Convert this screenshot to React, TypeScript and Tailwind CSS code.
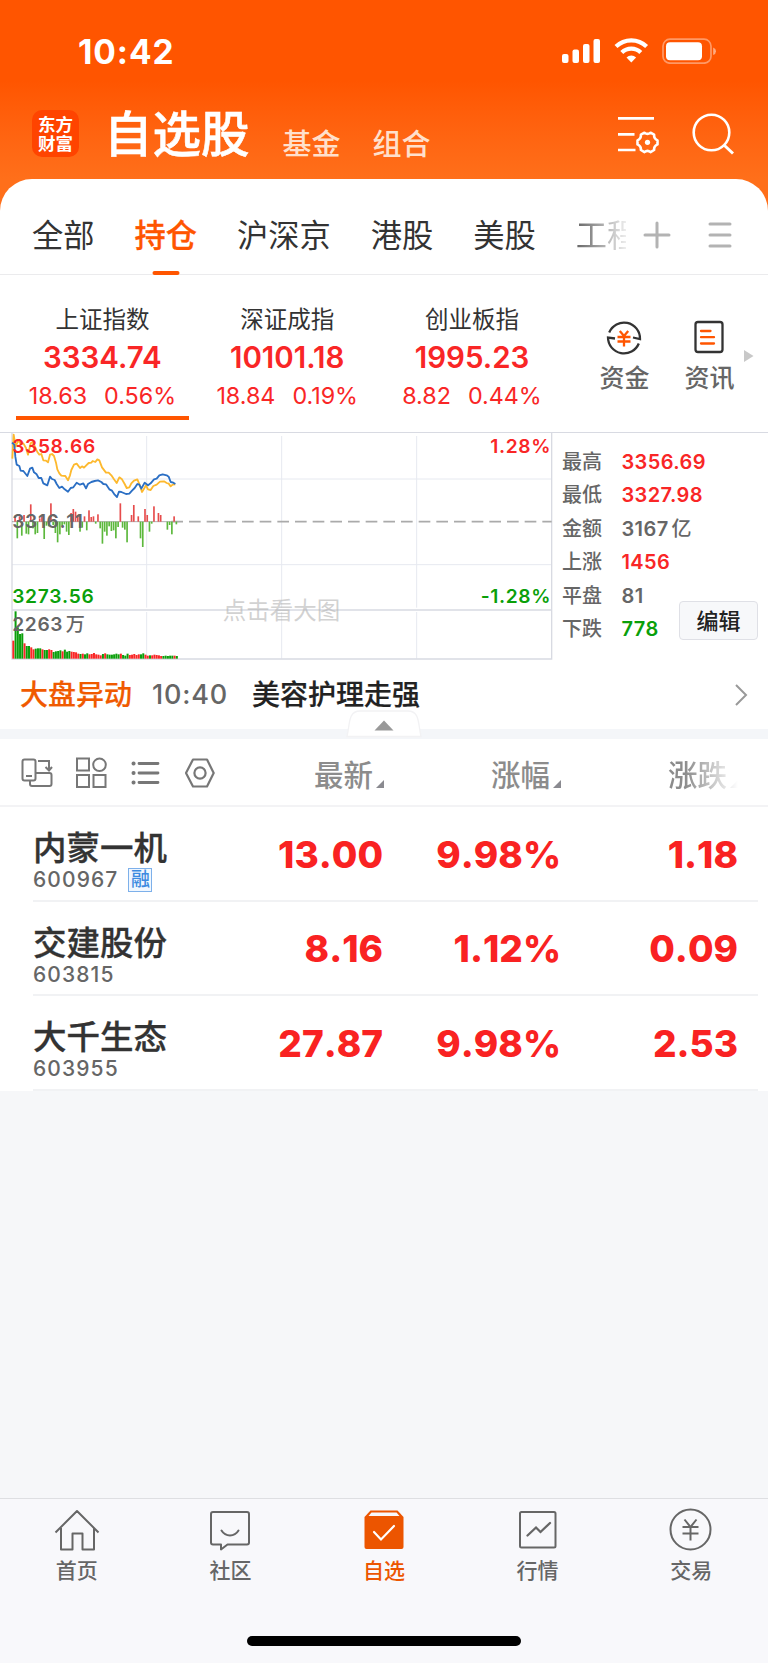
import type { ReactNode } from "react";
import clsx from "clsx";

const tabs = ["全部", "持仓", "沪深京", "港股", "美股"];

const indices = [
  { name: "上证指数", value: "3334.74", change: "18.63", percent: "0.56%", active: true },
  { name: "深证成指", value: "10101.18", change: "18.84", percent: "0.19%" },
  { name: "创业板指", value: "1995.23", change: "8.82", percent: "0.44%" },
];

const stats = [
  { label: "最高", value: "3356.69", color: "text-[#f92626]" },
  { label: "最低", value: "3327.98", color: "text-[#f92626]" },
  { label: "金额", value: "3167", unit: "亿", color: "text-[#666]" },
  { label: "上涨", value: "1456", color: "text-[#f92626]" },
  { label: "平盘", value: "81", color: "text-[#666]" },
  { label: "下跌", value: "778", color: "text-[#0a9f0a]" },
];

const stocks = [
  { name: "内蒙一机", code: "600967", margin: true, price: "13.00", percent: "9.98%", change: "1.18" },
  { name: "交建股份", code: "603815", price: "8.16", percent: "1.12%", change: "0.09" },
  { name: "大千生态", code: "603955", price: "27.87", percent: "9.98%", change: "2.53" },
];

// Minute bars, positive = up (red), negative = down (green)
const momentum = [
  0, 18, -50, 16, -42, 20, -36, -38, 52, -20, -38, -34, 10, 16, -52, -12, -14, 55, -10, -34, -62, -38, -12, -8, -30,
  -40, 26, 38, 30, 20, -30, -18, 16, -26, 34, 14, 16, -6, 22, -20, -66, -30, -42, -14, -28, -26, -50, -16, 55, -18,
  -24, -62, 0, 20, 50, 0, 16, -50, -76, 38, 20, -30, -6, 46, 0, 26, 20, 0, 0, -24, -10, -38, 16, -8,
];

// Sign is the direction of the bar, the size is its height
const volume = [
  -54, 142, 94, 74, 76, -46, 38, 38, -34, -28, 30, 31, 31, -28, 26, 26, -28, -26, 20, 22, 23, 25, -22, 27, 21, 23, -21,
  -20, -19, -15, 14, -15, 13, 16, -13, -14, -17, -13, -12, -10, 14, -16, 13, 12, 12, 13, 15, 13, -15, 11, 9, 15, -11,
  -12, -14, -11, -13, 13, 16, -12, -9, 10, -10, -12, -11, -10, -8, 8, 9, 8, 9, 9, -9, 8,
];

const averageLine =
  "37,116 41,44 47,80 55,60 62,72 70,70 78,84 84,104 92,70 98,66 104,78 112,96 118,104 124,102 130,121 138,122 144,127 150,104 156,102 162,108 168,128 172,148 178,160 184,167 196,168 204,181 210,166 214,150 222,134 230,131 240,144 246,139 252,143 258,137 266,129 274,128 278,123 286,126 292,118 298,121 306,142 318,158 326,158 334,166 342,178 350,189 358,172 366,178 374,192 380,204 388,202 394,190 402,182 412,178 418,192 426,216 432,206 438,196 444,208 452,210 460,198 470,194 480,185 492,184 500,189 506,191 512,199 518,194 526,193";

const priceLine =
  "36,68 43,74 46,110 50,134 58,138 62,152 70,153 82,168 90,146 97,143 102,157 110,163 116,174 124,174 130,190 142,196 150,170 156,177 164,180 170,192 178,204 186,200 194,208 204,215 212,204 220,202 230,188 240,194 250,190 258,205 264,192 274,186 284,183 294,181 304,186 310,192 318,193 328,208 336,212 344,224 351,231 357,215 364,216 378,222 388,221 396,212 404,204 412,192 418,194 424,206 434,188 444,196 452,190 462,178 470,176 478,166 488,163 500,166 506,170 512,186 520,188 526,192";

function Glyph({ size, className, children }: { size: number; className?: string; children: ReactNode }) {
  return (
    <svg
      width={size}
      height={size}
      viewBox={`0 0 ${size} ${size}`}
      fill="none"
      stroke="currentColor"
      strokeWidth="2"
      className={clsx("shrink-0", className)}
    >
      {children}
    </svg>
  );
}

function StatusBar() {
  return (
    <div className="flex h-[98px] items-center justify-between pt-1 pr-[51px] pl-[78px] text-white">
      <span className="pt-0.5 text-[33.500px] font-bold tracking-[0.9px]">10:42</span>
      <svg width="156" height="26" viewBox="0 0 156 26" fill="currentColor">
        <rect x="1" y="16" width="6.5" height="9" rx="2" />
        <rect x="11.5" y="11.5" width="6.5" height="13.5" rx="2" />
        <rect x="22" y="6" width="6.5" height="19" rx="2" />
        <rect x="32.5" y="1" width="6.5" height="24" rx="2" />
        <g fill="none" stroke="currentColor" strokeWidth="4.2">
          <path d="M55 8.500a22 22 0 0 1 30.600 0" />
          <path d="M60.800 14.600a13.500 13.500 0 0 1 19 0" />
        </g>
        <path d="M65.500 19.400a7 7 0 0 1 9.600 0l-4.800 5.200z" />
        <rect x="102" y="1.2" width="48" height="24" rx="7" fill="none" stroke="#fff" strokeOpacity=".4" strokeWidth="1.7" />
        <rect x="105" y="4.2" width="36" height="18" rx="4" />
        <path d="M152.200 9.500q2.800 1 2.800 3.700t-2.800 3.700z" opacity=".5" />
      </svg>
    </div>
  );
}

function Header() {
  return (
    <header className="h-[179px] bg-linear-to-b from-[#ff5500] from-45% to-[#ff6f1a]">
      <StatusBar />
      <div className="flex h-[81px] items-start pl-8 text-white">
        <div className="mt-3 flex size-[47px] flex-col items-center justify-center rounded-[10px] bg-[#ff4400] text-[17.500px] leading-[19px] font-bold">
          <span>东方</span>
          <span>财富</span>
        </div>
        <h1 className="ml-[25px] text-[48.500px] leading-[73px] font-medium [-webkit-text-stroke:0.6px_currentColor]">自选股</h1>
        <span className="ml-[33px] pt-[11px] text-[29px] leading-[72px] font-medium text-[#ffe0cc]">基金</span>
        <span className="ml-8 pt-[11px] text-[29px] leading-[72px] font-medium text-[#ffe0cc]">组合</span>
        <svg
          width="120"
          height="44"
          viewBox="0 0 120 44"
          fill="none"
          stroke="currentColor"
          strokeWidth="2.6"
          className="mt-[14px] mr-[32px] ml-auto"
        >
          <path d="M2 6.400h36M2 22.400h16.500M2 38h17.500" />
          <path
            strokeLinejoin="round"
            d="M28.500 20.700q3 2.300 6 0l3.600 2q-.3 4 3.400 5.700v4q-3.700 1.600-3.400 5.600l-3.600 2.100q-3-2.400-6 0l-3.600-2.100q.3-4-3.400-5.600v-4q3.700-1.700 3.400-5.700z"
          />
          <circle cx="31.5" cy="30.3" r="2.6" fill="currentColor" stroke="none" />
          <circle cx="95.5" cy="20.5" r="17.8" />
          <path d="m108 33 9 8.500" strokeWidth="3" />
        </svg>
      </div>
    </header>
  );
}

function MarketTabs() {
  return (
    <div className="flex h-24 items-start border-b border-[#ebebed] pl-8 text-[31.250px] leading-[114px] text-[#333]">
      {tabs.map((tab) => (
        <div
          key={tab}
          className={clsx(
            "relative mr-[40px] h-24",
            tab === "持仓" && "font-medium text-[#ff5500] [-webkit-text-stroke:0.3px_currentColor]",
          )}
        >
          {tab}
          {tab === "持仓" && <i className="absolute bottom-0 left-1/2 h-1 w-[27px] -translate-x-1/2 rounded-xs bg-[#ff5500]" />}
        </div>
      ))}
      <div className="w-[50px] overflow-hidden bg-linear-to-r from-[#666] to-[#eee] bg-clip-text whitespace-nowrap text-transparent">
        工程
      </div>
      <svg
        width="90"
        height="28"
        viewBox="0 0 90 28"
        stroke="#b3b3b3"
        strokeWidth="3"
        strokeLinecap="round"
        className="mt-[42px] ml-[17px]"
      >
        <path d="M2 14h24M14 2v24M67 3h20M67 14h20M67 25h20" />
      </svg>
    </div>
  );
}

function IndexSummary() {
  return (
    <div className="flex h-[157px] pl-2.5">
      {indices.map((item) => (
        <div key={item.name} className="relative flex w-[184.800px] flex-col items-center pt-[27px]">
          <span className="text-[23.500px] leading-9 text-[#333]">{item.name}</span>
          <span className="text-[29.500px] leading-[38px] font-semibold text-[#f92626]">{item.value}</span>
          <span className="flex gap-[17px] text-[23.300px] leading-[40px] text-[#f92626]">
            <span>{item.change}</span>
            <span>{item.percent}</span>
          </span>
          {item.active && <i className="absolute bottom-[12px] h-[4px] w-[173px] bg-[#ff5500]" />}
        </div>
      ))}
      <div className="flex flex-1 pt-[43px] text-[25px] leading-[37px] font-medium text-[#666]">
        <div className="ml-[34px] flex w-[52px] flex-col items-center gap-1">
          <Glyph size={38} className="text-[#333]">
            <path d="M4.200 14.500A16 16 0 0 1 35 21l-7-1.500M33.800 25.500A16 16 0 0 1 3 19.500l7 1" strokeWidth="2.3" />
            <path d="m14.800 13 4.200 5 4.200-5M12.500 19h13M12.500 23.500h13M19 18v10.500" stroke="#ff5500" strokeWidth="2.3" />
          </Glyph>
          <span className="whitespace-nowrap">资金</span>
        </div>
        <div className="ml-[33px] flex w-[52px] flex-col items-center gap-1">
          <Glyph size={38} className="text-[#333]">
            <rect x="5.5" y="4" width="27" height="30" rx="2.5" strokeWidth="2.3" />
            <path d="M11 13h9.500M11 19.200h13M11 25.500h13" stroke="#ff5500" strokeWidth="2.3" strokeLinecap="round" />
          </Glyph>
          <span className="whitespace-nowrap">资讯</span>
        </div>
        <svg width="10" height="14" viewBox="0 0 10 14" className="mt-[31px] ml-[9px]">
          <path d="M0 1v12l9.500-6z" fill="#c8c8c8" />
        </svg>
      </div>
    </div>
  );
}

function IntradayChart() {
  return (
    <svg width="542" height="229" viewBox="33 36 1626 687" className="-mt-px ml-[11px] shrink-0 [font-kerning:none]">
      <g stroke="#e6e9f0" strokeWidth="3">
        <path d="M36 177h1619M36 434h1619M440 48v515M845 48v515M1250 48v515M440 576v140M845 576v140M1250 576v140" />
        <path d="M36 570h1619M36 717h1619M36 38v681M1655 38v681" stroke="#d8dae2" strokeWidth="4" />
      </g>
      <path d="M36 305h500" stroke="#888" strokeWidth="2" />
      <path d="M514 305h1141" stroke="#aaa" strokeWidth="5" strokeDasharray="35 18" />
      {momentum.map((v, i) => (
        <rect
          key={i}
          x={36 + i * 6.72}
          y={v > 0 ? 305 - v : 305}
          width="5"
          height={Math.abs(v)}
          fill={v > 0 ? "#e64c4c" : "#5cb83c"}
        />
      ))}
      {volume.map((v, i) => (
        <rect
          key={i}
          x={37 + i * 6.72}
          y={716 - Math.abs(v)}
          width="6"
          height={Math.abs(v)}
          fill={v < 0 ? "#f92626" : "#0a9f0a"}
        />
      ))}
      <g fill="none" strokeWidth="5.5" strokeLinejoin="round">
        <polyline points={averageLine} stroke="#fdb92e" />
        <polyline points={priceLine} stroke="#2b6fc4" />
      </g>
      <g className="font-semibold" fontSize="57.5" letterSpacing="1.8">
        <text x="37" y="99" fill="#f92626">3358.66</text>
        <text x="37" y="323" fill="#666">3316.11</text>
        <text x="37" y="548" fill="#0a9f0a">3273.56</text>
        <text x="37" y="632" fill="#666">
          2263<tspan dx="8" className="font-medium">万</tspan>
        </text>
        <text x="1653" y="99" fill="#f92626" textAnchor="end">1.28%</text>
        <text x="1653" y="548" fill="#0a9f0a" textAnchor="end">-1.28%</text>
      </g>
      <text x="668" y="596" fontSize="70.5" fill="#b4b4b4" fillOpacity=".6">点击看大图</text>
    </svg>
  );
}

function IndexStats() {
  return (
    <div className="flex flex-1 items-start pt-[12px] pl-[9px]">
      <dl className="w-[117px] shrink-0 pt-[0.500px]">
        {stats.map((row) => (
          <div key={row.label} className="flex h-[33.500px] items-center text-[20px] leading-[33px]">
            <dt className="w-[59.500px] shrink-0 font-medium text-[#666]">{row.label}</dt>
            <dd className={clsx("font-semibold tracking-[0.4px] whitespace-nowrap", row.color)}>
              {row.value}
              {row.unit && <span className="ml-[3px] font-medium">{row.unit}</span>}
            </dd>
          </div>
        ))}
      </dl>
      <button className="mt-[156px] h-[39px] w-[79px] shrink-0 rounded border border-[#dfe0e6] bg-[#f7f8fa] text-[22px] leading-[36px] font-medium text-[#222]">
        编辑
      </button>
    </div>
  );
}

function NewsLine() {
  return (
    <div className="relative flex h-[78px] items-center border-b-[10px] border-[#f4f6f9] pl-5 text-[28px] leading-[64px] font-medium">
      <span className="text-[#f05a00] [-webkit-text-stroke:0.2px_currentColor]">大盘异动</span>
      <span className="ml-5 w-[100px] text-[27px] tracking-[0.8px] text-[#666]">10:40</span>
      <span className="text-[#222] [-webkit-text-stroke:0.2px_currentColor]">美容护理走强</span>
      <svg width="14" height="24" viewBox="0 0 14 24" fill="none" stroke="#999" strokeWidth="2" className="mr-5 ml-auto">
        <path d="m2 2 10 10L2 22" />
      </svg>
      <svg width="76" height="30" viewBox="0 0 76 30" className="absolute -bottom-[10px] left-[346px]">
        <path d="M1 27.500C4 15 2 2 14 2h48c12 0 10 13 13 25.500z" fill="#fff" stroke="#f2f2f4" strokeWidth="1.3" />
        <path d="M28.500 21.500 38 11.500l9.500 10z" fill="#999" />
      </svg>
    </div>
  );
}

function SortHeader({ children, className }: { children: ReactNode; className?: string }) {
  return (
    <span className={clsx("flex items-center justify-end pt-1.5 text-[29.500px] leading-[62px] font-medium text-[#8c8c8c]", className)}>
      {children}
      <svg width="8" height="8" viewBox="0 0 8 8" className="mt-[17px] ml-[3px]">
        <path d="M8 0v8H0z" fill="#8a8a90" />
      </svg>
    </span>
  );
}

function ListToolbar() {
  return (
    <div className="flex h-[68px] items-center border-b-2 border-[#f3f3f5] text-[#777]">
      <div className="flex w-[226px] gap-[22px] pt-0.5 pl-5">
        <Glyph size={33}>
          <rect x="2.5" y="2.5" width="13" height="21" rx="2" />
          <path d="M6 19h6M18 4h11v9m-3.500-3 3.500 3.500 3-3.500M16 16h13.500a2 2 0 0 1 2 2v9a2 2 0 0 1-2 2H12a2 2 0 0 1-2-2v-3" />
        </Glyph>
        <Glyph size={33}>
          <rect x="2" y="1.5" width="12" height="12" />
          <circle cx="24.5" cy="7.8" r="6.3" />
          <rect x="2" y="18" width="12" height="12" />
          <rect x="18.5" y="18" width="12" height="12" />
        </Glyph>
        <Glyph size={33}>
          <path d="M9 6.500h19M9 16h19M9 25.500h19" strokeWidth="2.8" strokeLinecap="round" />
          <path d="M3.500 6.500h.1M3.500 16h.1M3.500 25.500h.1" strokeWidth="4" strokeLinecap="round" />
        </Glyph>
        <Glyph size={33}>
          <path d="M8 2.500h14L28.700 16 22 29.500H8L1 16z" strokeLinejoin="round" strokeWidth="2.2" />
          <circle cx="15" cy="16" r="5.6" strokeWidth="2.2" />
        </Glyph>
      </div>
      <SortHeader className="w-[158px]">最新</SortHeader>
      <SortHeader className="w-[177px]">涨幅</SortHeader>
      <SortHeader className="w-[177px] mask-r-from-70% mask-r-to-100%">涨跌</SortHeader>
    </div>
  );
}

function StockRow({ stock }: { stock: (typeof stocks)[number] }) {
  return (
    <li className="mr-[10px] ml-[33px] flex h-[94.500px] items-center border-b-2 border-[#f1f2f4] text-[37px] font-extrabold text-[#f92222] [font-kerning:none]">
      <div className="w-[172px] pt-[15px]">
        <div className="text-[33.500px] leading-[38px] font-medium whitespace-nowrap text-[#333] [-webkit-text-stroke:0.3px_currentColor]">
          {stock.name}
        </div>
        <div className="flex h-[25px] items-center text-[21px] leading-[25px] font-medium tracking-[1.100px] text-[#666]">
          {stock.code}
          {stock.margin && (
            <span className="ml-[10px] flex size-6 items-center justify-center border border-[#7db0ea] bg-[#f0f7ff] text-[19px] tracking-normal text-[#3c8ae0]">
              融
            </span>
          )}
        </div>
      </div>
      <span className="w-[178px] pt-0.5 text-right">{stock.price}</span>
      <span className="w-[178px] pt-0.5 text-right">{stock.percent}</span>
      <span className="w-[177px] pt-0.5 text-right">{stock.change}</span>
    </li>
  );
}

function NavItem({ label, active, children }: { label: string; active?: boolean; children: ReactNode }) {
  return (
    <a className={clsx("flex flex-1 flex-col items-center", active ? "text-[#ec5500]" : "text-[#666]")}>
      <Glyph size={46}>{children}</Glyph>
      <span className="text-[21px] leading-[36px] font-medium">{label}</span>
    </a>
  );
}

function BottomNav() {
  return (
    <nav className="mt-auto h-[165px] border-t border-[#dedfe2] bg-[#f8f8fb]">
      <div className="flex pt-[8px]">
        <NavItem label="首页">
          <path d="M1.500 25.500 23 4l21.500 21.500M7 21v21.500h11.500v-16h10v16H40V21" strokeLinejoin="round" />
        </NavItem>
        <NavItem label="社区">
          <path d="M6 5h34a2 2 0 0 1 2 2v28.500a2 2 0 0 1-2 2H20.500l-6.500 5v-5H6a2 2 0 0 1-2-2V7a2 2 0 0 1 2-2z" strokeLinejoin="round" />
          <path d="M14.500 23.500c4 6.500 13 6.500 17 0" strokeLinecap="round" />
        </NavItem>
        <NavItem label="自选" active>
          <path d="M9.500 3.500h27L42.500 10v30a2 2 0 0 1-2 2h-35a2 2 0 0 1-2-2V10z" fill="currentColor" stroke="none" />
          <path d="M10.500 5.500h25L38.500 9h-31z" fill="#f8f8fb" stroke="none" />
          <path d="m13 25 7 7.500L33 19" stroke="#fff" strokeWidth="2.2" strokeLinecap="round" />
        </NavItem>
        <NavItem label="行情">
          <rect x="5" y="5" width="35.5" height="35.5" rx="1.5" />
          <path d="m12.500 28.500 8.500-8 4.500 4.500 9.500-9" strokeWidth="2.3" strokeLinecap="round" />
        </NavItem>
        <NavItem label="交易">
          <circle cx="22.5" cy="22.5" r="20" />
          <path d="m16.500 12.500 6 7.500 6-7.500M14.500 20h16M14.500 26.500h16M22.500 20v13.500" />
        </NavItem>
      </div>
      <div className="mx-auto mt-[47px] h-[10px] w-[274px] rounded-full bg-black" />
    </nav>
  );
}

export default function App() {
  return (
    <div className="flex h-[1663px] w-[768px] flex-col overflow-hidden bg-[#f6f7f9] font-['Inter','Noto_Sans_CJK_SC',sans-serif]">
      <Header />
      <main className="bg-[#ff6f1a]">
        <div className="rounded-t-[32px] bg-white">
          <MarketTabs />
          <IndexSummary />
          <div className="flex h-[229px] border-t border-[#d8dae2]">
            <IntradayChart />
            <IndexStats />
          </div>
          <NewsLine />
          <ListToolbar />
          <ul>
            {stocks.map((stock) => (
              <StockRow key={stock.code} stock={stock} />
            ))}
          </ul>
        </div>
      </main>
      <BottomNav />
    </div>
  );
}
